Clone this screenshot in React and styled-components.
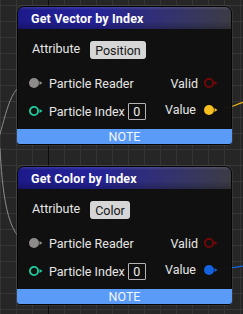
import styled, { createGlobalStyle } from "styled-components";

const Global = createGlobalStyle`
  html, body {
    margin: 0;
    padding: 0;
    background: #262626;
  }
  * { box-sizing: border-box; }
`;

const Canvas = styled.div`
  position: relative;
  width: 243px;
  height: 314px;
  overflow: hidden;
  font-family: Roboto, "Liberation Sans", sans-serif;
  background-color: #262626;
  background-image:
    linear-gradient(90deg, transparent 48px, #0c0c0c 48px, #0c0c0c 49px, transparent 49px),
    linear-gradient(90deg, #353535 1px, transparent 1px),
    linear-gradient(#353535 1px, transparent 1px);
  background-size: 100% 100%, 16px 16px, 16px 16px;
  background-position: 0 0, 0 0, 0 5px;
`;

const Wires = styled.svg`
  position: absolute;
  left: 0;
  top: 0;
`;

const Node = styled.div`
  position: absolute;
  left: 18px;
  top: ${({ $top }) => $top}px;
  width: 213px;
  border-radius: 6px 6px 3px 3px;
  background: rgba(16, 16, 16, 0.96);
  box-shadow: 0 0 0 1px #050505, 0 0 0 2px rgba(90, 90, 90, 0.35);
  display: flex;
  flex-direction: column;
`;

const Header = styled.div`
  height: 22px;
  border-radius: 6px 6px 0 0;
  padding: 0 0 0 13px;
  display: flex;
  align-items: center;
  background:
    linear-gradient(180deg, rgba(255,255,255,0.12) 0px, rgba(255,255,255,0) 3px, rgba(0,0,0,0) 14px, rgba(0,0,0,0.25) 22px),
    linear-gradient(90deg, #1d1a8a 0%, #25239a 35%, #34346a 75%, #3c3c46 100%);
  color: #ffffff;
  font-weight: bold;
  font-size: 12.5px;
  letter-spacing: 0.15px;
`;

const AttrRow = styled.div`
  display: flex;
  align-items: center;
  height: 18px;
  margin: 10px 0 0 14px;
  gap: 10px;
  color: #e6e6e6;
  font-size: 12.5px;
`;

const Pill = styled.span`
  background: #d6d6d6;
  color: #151515;
  border-radius: 3px;
  padding: 0 5px;
  height: 18px;
  line-height: 19px;
  font-size: 12.5px;
  margin-top: 3px;
`;

const Pins = styled.div`
  display: flex;
  flex-direction: column;
  gap: 8px;
  margin-top: 16px;
  padding: 0 12px 0 10px;
`;

const PinRow = styled.div`
  display: flex;
  align-items: center;
  justify-content: space-between;
  height: 20px;
`;

const Side = styled.div`
  display: flex;
  align-items: center;
  gap: ${({ $gap }) => $gap || 6}px;
  color: #e6e6e6;
  font-size: 12.5px;
  margin-top: ${({ $shift }) => $shift || 0}px;
`;

const ValueBox = styled.span`
  border: 1px solid #b4b4b4;
  border-radius: 1px;
  width: 18px;
  height: 17px;
  line-height: 15px;
  text-align: center;
  font-size: 12.5px;
  color: #eeeeee;
  margin-left: -2px;
`;

const Note = styled.div`
  margin: 8px -1px 0;
  height: 15px;
  border-radius: 0 0 3px 3px;
  background: #5b9bf8;
  color: #f2f6ff;
  font-size: 12.5px;
  line-height: 15px;
  text-align: center;
`;

function Pin({ color, filled }) {
  return (
    <svg width="16" height="12" viewBox="0 0 16 12">
      <circle
        cx="6"
        cy="6"
        r={filled ? 5 : 4.1}
        fill={filled ? color : "none"}
        stroke={color}
        strokeWidth={filled ? 0 : 1.8}
      />
      <polygon points="11.5,4 14.5,6 11.5,8" fill={color} />
    </svg>
  );
}

function IndexNode({ top, title, attribute, valueColor }) {
  return (
    <Node $top={top}>
      <Header>{title}</Header>
      <AttrRow>
        Attribute
        <Pill>{attribute}</Pill>
      </AttrRow>
      <Pins>
        <PinRow>
          <Side $gap={5}>
            <Pin color="#8f8b8b" filled />
            Particle Reader
          </Side>
          <Side $gap={5}>
            Valid
            <Pin color="#7a0606" />
          </Side>
        </PinRow>
        <PinRow>
          <Side $gap={5}>
            <Pin color="#1fd0a0" />
            Particle Index
            <ValueBox>0</ValueBox>
          </Side>
          <Side $gap={7} $shift={-3}>
            Value
            <Pin color={valueColor} filled />
          </Side>
        </PinRow>
      </Pins>
      <Note>NOTE</Note>
    </Node>
  );
}

export default function App() {
  return (
    <>
      <Global />
      <Canvas>
        <Wires width="243" height="314" viewBox="0 0 243 314">
          <path d="M -4 146 C 6 120, 8 84, 30 82" stroke="#8c8c8c" strokeWidth="1" fill="none" />
          <path d="M 0 148 C 2 185, 6 242, 30 242" stroke="#8c8c8c" strokeWidth="1" fill="none" />
          <path d="M 224 108 C 232 108, 236 104, 244 102" stroke="#f2b818" strokeWidth="1.2" fill="none" />
          <path d="M 224 268 C 232 268, 236 267, 244 266" stroke="#1466e6" strokeWidth="1.2" fill="none" />
        </Wires>
        <IndexNode top={7} title="Get Vector by Index" attribute="Position" valueColor="#f7c020" />
        <IndexNode top={167} title="Get Color by Index" attribute="Color" valueColor="#1462e0" />
      </Canvas>
    </>
  );
}
